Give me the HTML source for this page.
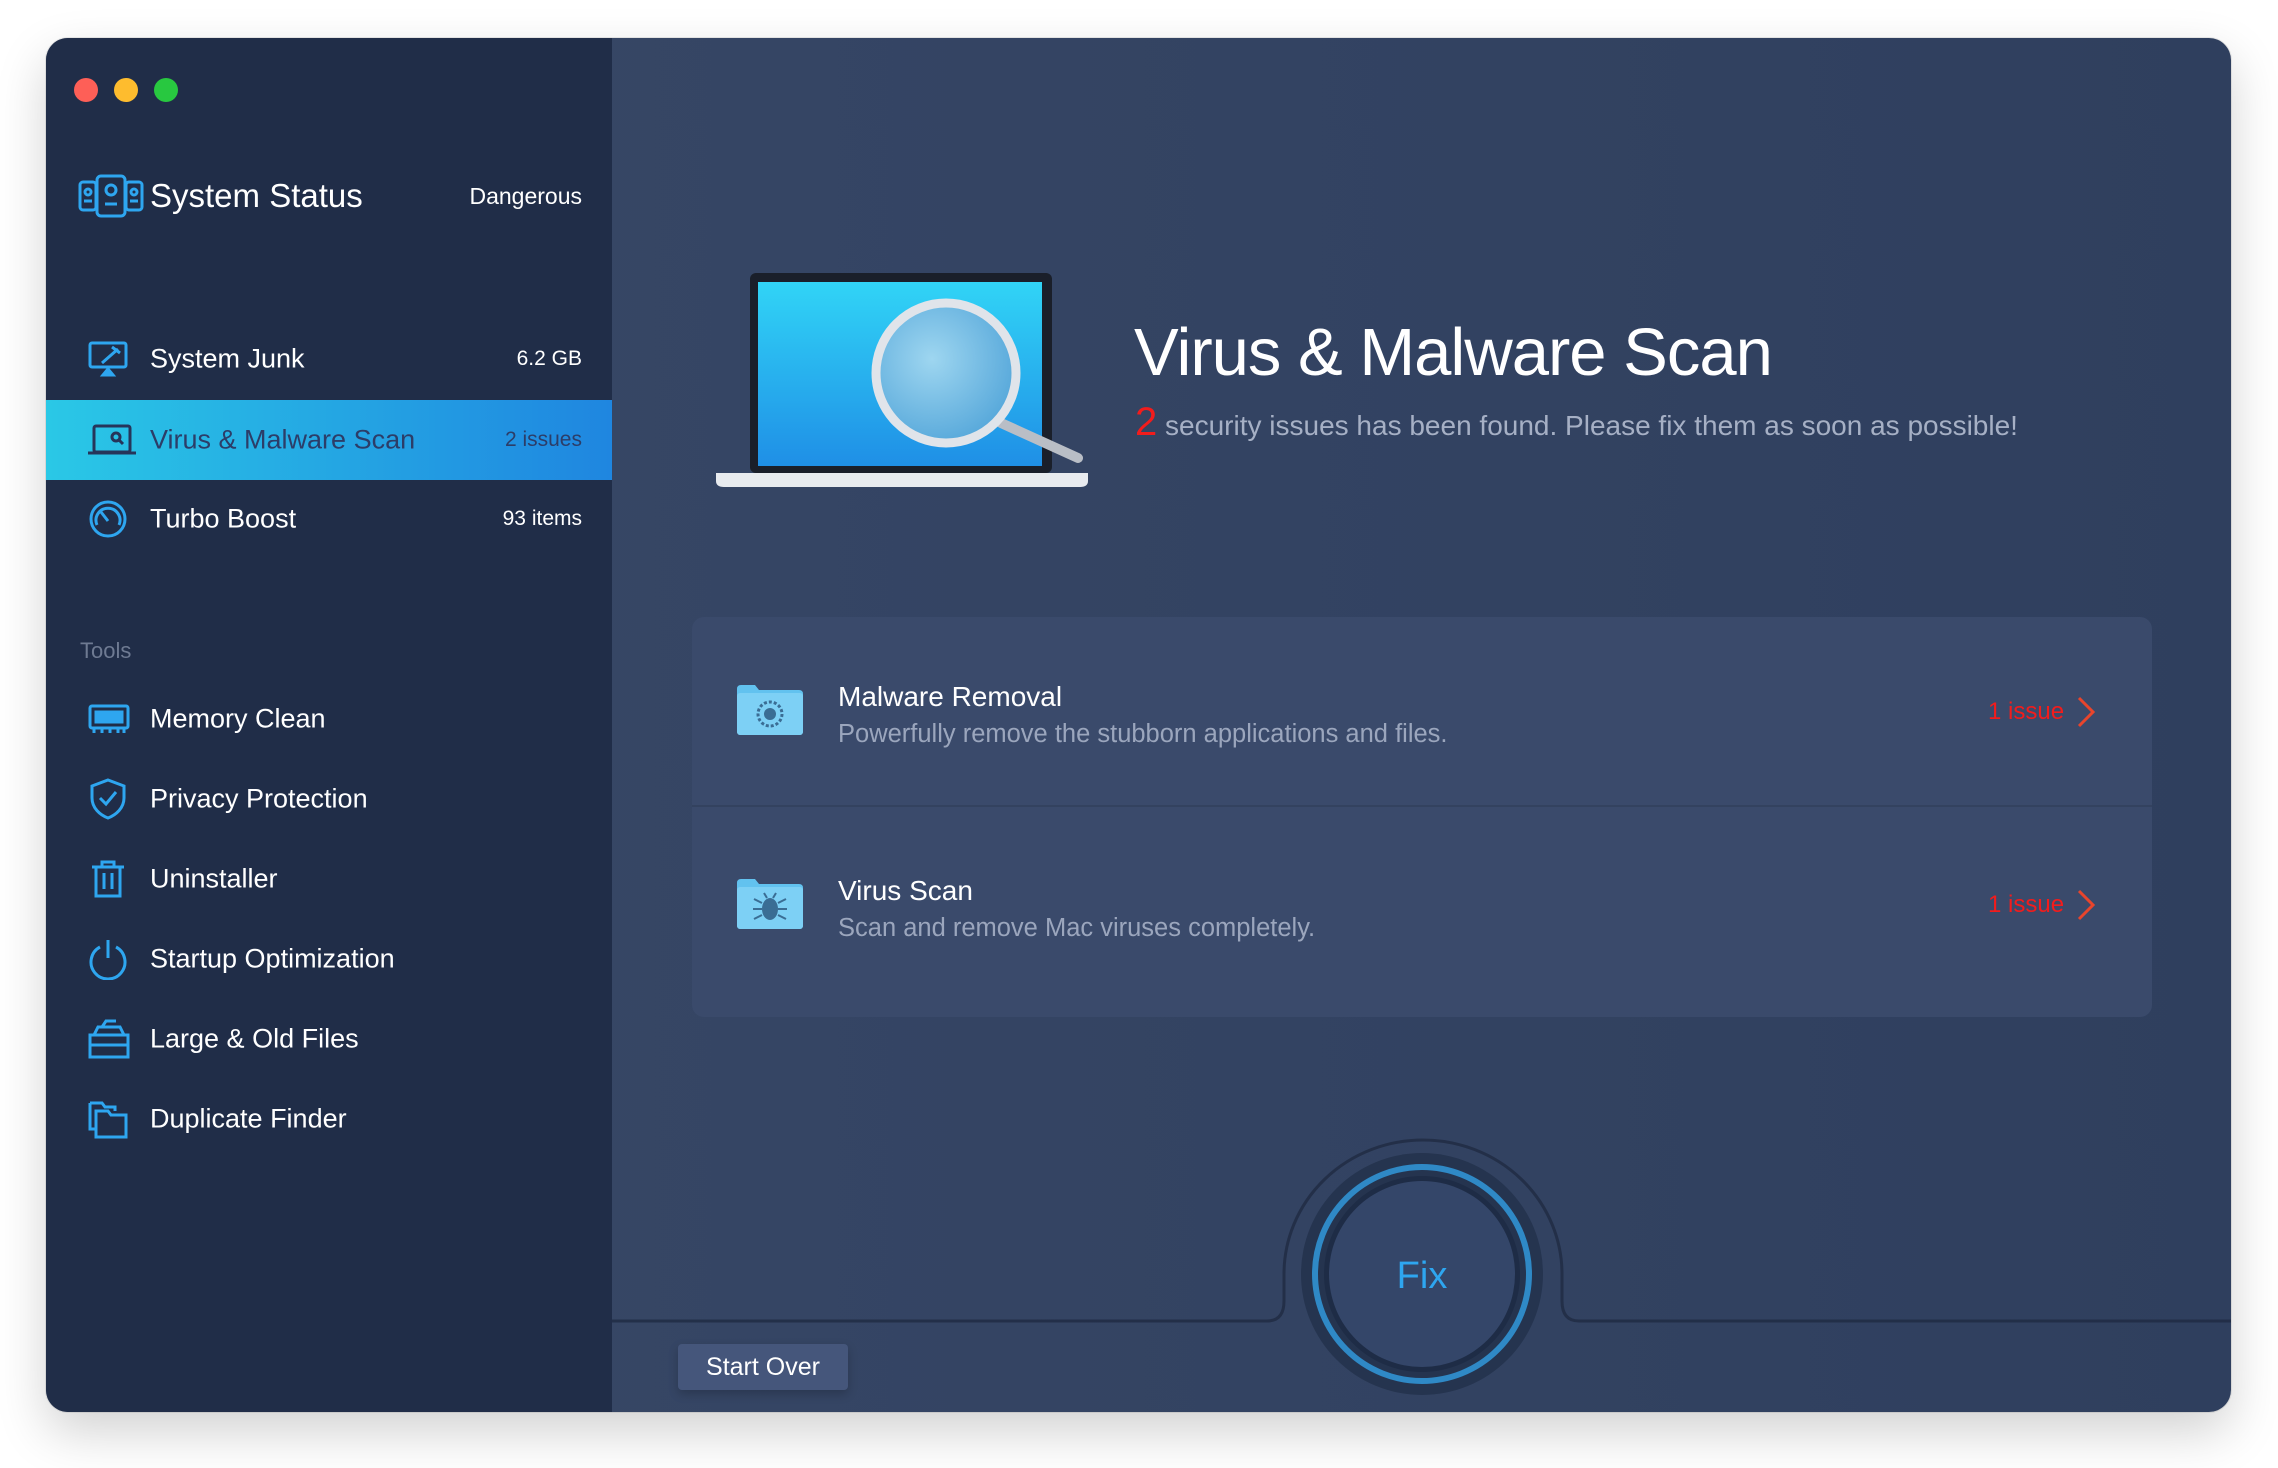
<!DOCTYPE html>
<html><head><meta charset="utf-8"><style>
*{margin:0;padding:0;box-sizing:border-box}
body{width:2278px;height:1468px;background:#fff;font-family:"Liberation Sans",sans-serif;position:relative;overflow:hidden}
.win{position:absolute;left:46px;top:38px;width:2185px;height:1374px;border-radius:22px;overflow:hidden;box-shadow:0 20px 50px rgba(0,0,0,.18),0 0 0 1px rgba(0,0,0,.08);background:linear-gradient(90deg,#384867,#2f3f5e)}
.side{position:absolute;left:0;top:0;width:566px;height:100%;background:#202d48}
.tl{position:absolute;top:40px;width:24px;height:24px;border-radius:50%}
.abs{position:absolute}
.item{position:absolute;left:0;width:566px;height:80px;color:#fff;font-size:27px}
.item .t{position:absolute;left:104px;top:50%;transform:translateY(-50%)}
.item .v{position:absolute;right:30px;top:50%;transform:translateY(-50%);font-size:21px}
.item svg{position:absolute;left:42px;top:50%;transform:translateY(-50%)}
</style></head><body>
<div class="win">
<div class="side">
<div class="tl" style="left:28px;background:#fe5f57"></div>
<div class="tl" style="left:68px;background:#febc2e"></div>
<div class="tl" style="left:108px;background:#28c840"></div>
<svg class="abs" style="left:32px;top:136px" width="66" height="44" viewBox="0 0 66 44" fill="none" stroke="#2ea6f0" stroke-width="3"><rect x="2" y="8" width="16" height="28" rx="3"/><rect x="48" y="8" width="16" height="28" rx="3"/><rect x="19" y="2" width="28" height="40" rx="4"/><circle cx="33" cy="16" r="5"/><line x1="27" y1="30" x2="39" y2="30"/><circle cx="10" cy="18" r="3"/><line x1="6" y1="27" x2="14" y2="27"/><circle cx="56" cy="18" r="3"/><line x1="52" y1="27" x2="60" y2="27"/></svg>
<div class="abs" style="left:104px;top:139px;color:#fff;font-size:33px">System Status</div>
<div class="abs" style="right:30px;top:145px;color:#fff;font-size:23px">Dangerous</div>

<div class="item" style="top:281px"><svg width="40" height="36" viewBox="0 0 40 36" fill="none" stroke="#2ea6f0" stroke-width="3"><rect x="2" y="2" width="36" height="24" rx="2"/><path d="M14 22 L30 8 M24 6 L32 12"/><path d="M15 34h10l-5-6z" fill="#2ea6f0"/></svg><span class="t">System Junk</span><span class="v">6.2 GB</span></div>
<div class="item" style="top:362px;background:linear-gradient(90deg,#2ac8e6,#1f86e0)"><svg width="48" height="32" viewBox="0 0 48 32" fill="none" stroke="#26355a" stroke-width="3"><rect x="6" y="2" width="36" height="26" rx="2"/><line x1="0" y1="29" x2="48" y2="29"/><circle cx="28" cy="13" r="4"/><line x1="31" y1="16" x2="35" y2="20"/></svg><span class="t" style="color:#2c3d68">Virus &amp; Malware Scan</span><span class="v" style="color:#2c3d68">2 issues</span></div>
<div class="item" style="top:441px"><svg width="40" height="40" viewBox="0 0 40 40" fill="none" stroke="#2ea6f0" stroke-width="3"><circle cx="20" cy="20" r="17"/><path d="M9 26a12 12 0 1 1 22 0"/><line x1="20" y1="22" x2="13" y2="13"/></svg><span class="t">Turbo Boost</span><span class="v">93 items</span></div>

<div class="abs" style="left:34px;top:600px;color:#6e7a92;font-size:22px">Tools</div>
<div class="item" style="top:641px"><svg width="42" height="30" viewBox="0 0 42 30" fill="none" stroke="#2ea6f0" stroke-width="3"><rect x="2" y="2" width="38" height="22" rx="2"/><rect x="8" y="8" width="26" height="10" fill="#2ea6f0"/><path d="M6 24v5M14 24v5M22 24v5M30 24v5M36 24v5"/></svg><span class="t">Memory Clean</span></div>
<div class="item" style="top:721px"><svg width="40" height="42" viewBox="0 0 40 42" fill="none" stroke="#2ea6f0" stroke-width="3"><path d="M20 2 L36 8 V20 C36 30 28 37 20 40 C12 37 4 30 4 20 V8 Z"/><path d="M12 20 L18 26 L28 14"/></svg><span class="t">Privacy Protection</span></div>
<div class="item" style="top:801px"><svg width="40" height="40" viewBox="0 0 40 40" fill="none" stroke="#2ea6f0" stroke-width="3"><path d="M4 8h32M14 8V3h12v5M8 8v29h24V8M16 14v16M24 14v16"/></svg><span class="t">Uninstaller</span></div>
<div class="item" style="top:881px"><svg width="40" height="42" viewBox="0 0 40 42" fill="none" stroke="#2ea6f0" stroke-width="3"><path d="M12 9a17 17 0 1 0 16 0"/><line x1="20" y1="2" x2="20" y2="20"/></svg><span class="t">Startup Optimization</span></div>
<div class="item" style="top:961px"><svg width="42" height="40" viewBox="0 0 42 40" fill="none" stroke="#2ea6f0" stroke-width="3"><path d="M2 16h38v22H2zM2 26h38M6 16l4-8h22l4 8M14 8l4-6h10"/></svg><span class="t">Large &amp; Old Files</span></div>
<div class="item" style="top:1041px"><svg width="40" height="40" viewBox="0 0 40 40" fill="none" stroke="#2ea6f0" stroke-width="3"><path d="M2 4h12l3 4h10v4M8 12h12l3 4h15v22H8z"/><path d="M2 4v26h6"/></svg><span class="t">Duplicate Finder</span></div>
</div>

<!-- main -->
<svg class="abs" style="left:670px;top:235px" width="372" height="216" viewBox="0 0 372 216">
<defs><linearGradient id="sc" x1="0" y1="0" x2="0" y2="1"><stop offset="0" stop-color="#31d4f6"/><stop offset="1" stop-color="#1f8fe6"/></linearGradient>
<radialGradient id="gl" cx=".4" cy=".4" r=".7"><stop offset="0" stop-color="#9ed6f0"/><stop offset="1" stop-color="#4fa3d8"/></radialGradient></defs>
<rect x="34" y="0" width="302" height="200" rx="6" fill="#1a1f2a"/>
<rect x="42" y="9" width="284" height="184" fill="url(#sc)"/>
<path d="M0 200h372v8q0 6-8 6H8q-8 0-8-6z" fill="#e8ebef"/>
<line x1="285" y1="150" x2="362" y2="185" stroke="#b9bec6" stroke-width="10" stroke-linecap="round"/>
<circle cx="230" cy="100" r="70" fill="url(#gl)" stroke="#e0e4ea" stroke-width="9"/>
</svg>
<div class="abs" style="left:1088px;top:276px;color:#fff;font-size:67px;letter-spacing:-1px">Virus &amp; Malware Scan</div>
<div class="abs" style="left:1089px;top:362px;color:#a6b0c5;font-size:28px"><span style="color:#f21c1c;font-size:40px">2</span> security issues has been found. Please fix them as soon as possible!</div>

<div class="abs" style="left:646px;top:579px;width:1460px;height:400px;background:#3a4a6b;border-radius:12px"></div>
<div class="abs" style="left:646px;top:767px;width:1460px;height:2px;background:#33425f"></div>

<svg class="abs" style="left:691px;top:647px" width="66" height="50" viewBox="0 0 66 50"><path d="M0 4q0-4 4-4h14l4 5h40q4 0 4 4v37q0 4-4 4H4q-4 0-4-4z" fill="#62c2ef"/><rect x="0" y="8" width="66" height="42" rx="3" fill="#7dd0f5"/><circle cx="33" cy="29" r="12" fill="none" stroke="#3a6d94" stroke-width="3" stroke-dasharray="3 2"/><circle cx="33" cy="29" r="6" fill="#3a6d94"/></svg>
<div class="abs" style="left:792px;top:643px;color:#fff;font-size:28px">Malware Removal</div>
<div class="abs" style="left:792px;top:682px;color:#9ba6bd;font-size:25.5px">Powerfully remove the stubborn applications and files.</div>
<div class="abs" style="left:1942px;top:660px;color:#f21c1c;font-size:24px">1 issue</div>
<svg class="abs" style="left:2030px;top:657px" width="20" height="34" viewBox="0 0 20 34"><path d="M3 3l14 14L3 31" fill="none" stroke="#e8452c" stroke-width="3"/></svg>

<svg class="abs" style="left:691px;top:841px" width="66" height="50" viewBox="0 0 66 50"><path d="M0 4q0-4 4-4h14l4 5h40q4 0 4 4v37q0 4-4 4H4q-4 0-4-4z" fill="#62c2ef"/><rect x="0" y="8" width="66" height="42" rx="3" fill="#7dd0f5"/><ellipse cx="33" cy="30" rx="8" ry="11" fill="#3a6d94"/><path d="M25 24l-8-4M25 30h-9M25 36l-8 4M41 24l8-4M41 30h9M41 36l8 4M30 19l-3-5M36 19l3-5" stroke="#3a6d94" stroke-width="2"/></svg>
<div class="abs" style="left:792px;top:837px;color:#fff;font-size:28px">Virus Scan</div>
<div class="abs" style="left:792px;top:876px;color:#9ba6bd;font-size:25.5px">Scan and remove Mac viruses completely.</div>
<div class="abs" style="left:1942px;top:853px;color:#f21c1c;font-size:24px">1 issue</div>
<svg class="abs" style="left:2030px;top:850px" width="20" height="34" viewBox="0 0 20 34"><path d="M3 3l14 14L3 31" fill="none" stroke="#e8452c" stroke-width="3"/></svg>

<svg class="abs" style="left:566px;top:1052px" width="1619" height="322" viewBox="0 0 1619 322">
<path d="M0 231H655q17 0 17-20V184a139 134 0 0 1 278 0V211q0 20 17 20H1619" fill="none" stroke="#1f2b42" stroke-width="3" opacity=".8"/>
<circle cx="810" cy="184" r="121" fill="#25344f"/>
<circle cx="810" cy="184" r="107" fill="none" stroke="#2f89c6" stroke-width="6"/>
<circle cx="810" cy="184" r="98" fill="#1e2c46"/>
<circle cx="810" cy="184" r="93" fill="#344669"/>
<text x="810" y="198" text-anchor="middle" font-family="Liberation Sans, sans-serif" font-size="38" fill="#2ea6f0">Fix</text>
</svg>
<div class="abs" style="left:632px;top:1306px;width:170px;height:46px;background:#45567b;border-radius:4px;color:#fff;font-size:25px;text-align:center;line-height:46px;box-shadow:0 4px 10px rgba(0,0,0,.2)">Start Over</div>
</div>
</body></html>
